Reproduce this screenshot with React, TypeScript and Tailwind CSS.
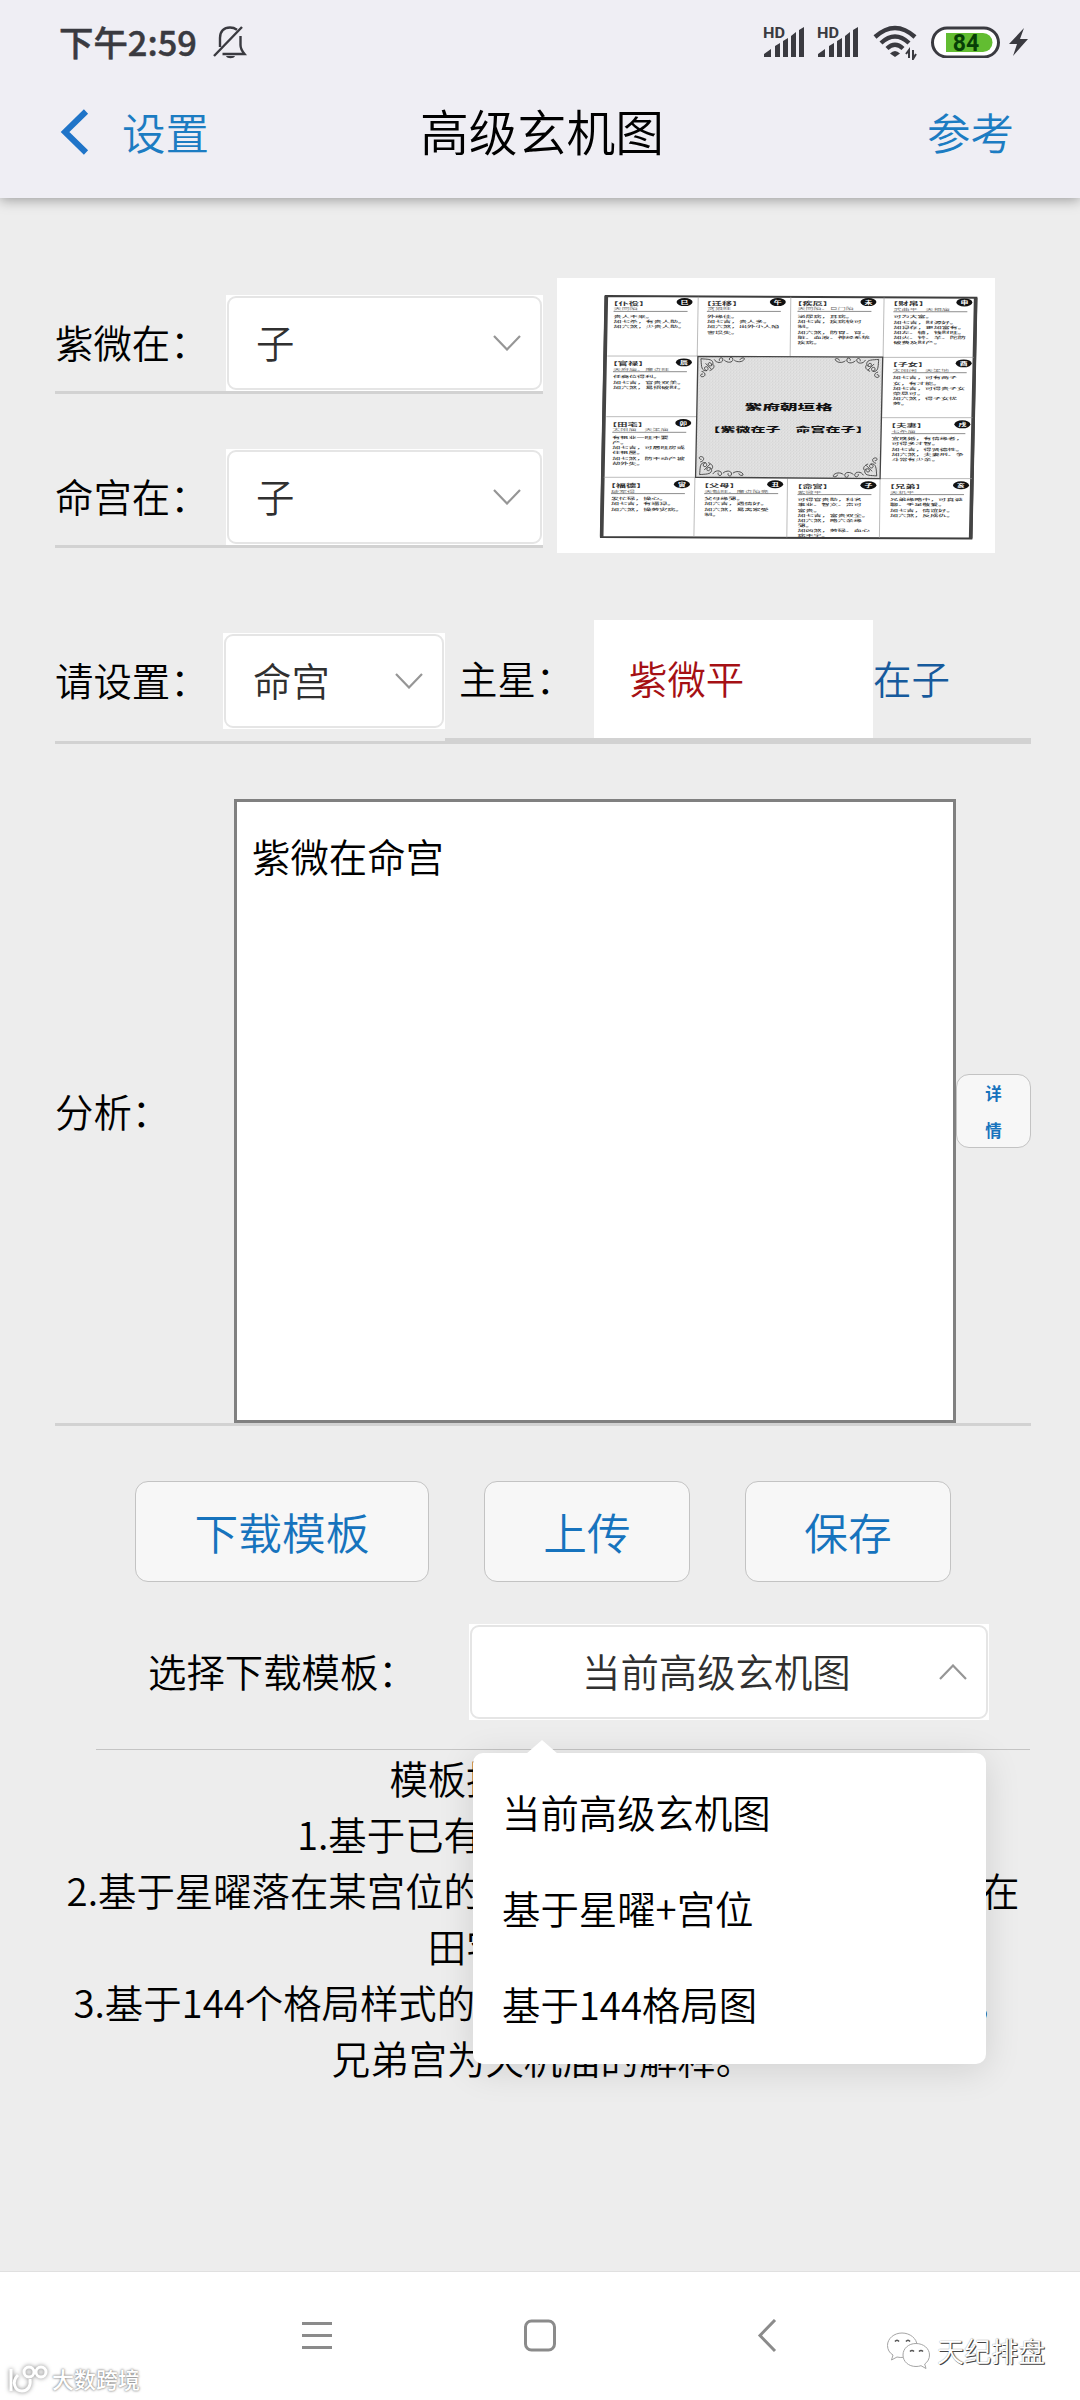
import type { ReactNode } from 'react'
import clsx from 'clsx'

const fontStack = "font-['Noto_Sans_CJK_SC','Noto_Sans',sans-serif]"

interface PalaceCell {
  x: number
  y: number
  title: string
  branch: string
  stars: string
  lines: string[]
}

const palaces: PalaceCell[] = [
  { x: 190, y: 98, title: '仆役', branch: '巳', stars: '天同陷', lines: ['贵人不来。', '加七杀，有贵人助。', '加六煞，少贵人助。'] },
  { x: 470, y: 98, title: '迁移', branch: '午', stars: '贪狼旺', lines: ['外缘佳。', '加七吉，贵人多。', '加六煞，出外小人陷', '害损失。'] },
  { x: 742, y: 98, title: '疾厄', branch: '未', stars: '天同陷、巨门陷', lines: ['泌尿病，耳病。', '加七吉，疾病较可', '制。', '加六煞，防胃、肾、', '脏、血液、神经系统', '疾病。'] },
  { x: 1030, y: 99, title: '财帛', branch: '申', stars: '武曲平　天相庙', lines: ['可为大富。', '加七吉，财源好。', '加禄存，更加富有。', '加左、辅，钱财旺。', '加火、铃、羊、陀防', '破费及财产。'] },
  { x: 188, y: 279, title: '官禄', branch: '辰', stars: '天府庙、廉贞旺', lines: ['任高位得利。', '加七吉，官贵双美。', '加六煞，易招破财。'] },
  { x: 1028, y: 282, title: '子女', branch: '酉', stars: '太阳闲　天梁地', lines: ['加七吉，可有两子', '女，有才能。', '加七吉，可得贵子女', '荣显可。', '加六煞，得子女忧', '劳。'] },
  { x: 186, y: 461, title: '田宅', branch: '卯', stars: '太阳庙　天梁庙', lines: ['有祖业一旺不要', '产。', '加七吉，可居旺房或', '住祖屋。', '加七煞，防不动产被', '劫外失。'] },
  { x: 1024, y: 465, title: '夫妻', branch: '戌', stars: '七杀庙', lines: ['宜晚婚，有情缘者，', '可得多才智。', '加七吉，得贤德性。', '加六煞，夫妻刑、争', '斗常有少亲。'] },
  { x: 182, y: 645, title: '福德', branch: '寅', stars: '破军得', lines: ['发忙碌，操心。', '加七吉，有福禄。', '加六煞，操劳灾病。'] },
  { x: 462, y: 645, title: '父母', branch: '丑', stars: '天魁旺、廉贞陷亮', lines: ['父母缘薄。', '加六吉，遇情好。', '加六煞，易离家受', '制。'] },
  { x: 742, y: 648, title: '命宫', branch: '子', stars: '紫微平', lines: ['可得官贵助，科名', '事业、智文、声可', '富贵。', '加七吉，富贵双全。', '加六煞，略六亲缘', '薄。', '加凶煞，劳碌、血心', '病不宁。'] },
  { x: 1020, y: 648, title: '兄弟', branch: '亥', stars: '天机平', lines: ['兄弟缘略中，可真诚', '聊、手足敬爱。', '加七吉，情谊好。', '加六煞，反成仇。'] },
]

const templateOptions = ['当前高级玄机图', '基于星曜+宫位', '基于144格局图']

const helpLines = [
  '模板提供三种方式',
  '1.基于已有的高级玄机图模板',
  '2.基于星曜落在某宫位的解释模板，例如紫微在命宫，在',
  '田宅宫的解释',
  '3.基于144个格局样式的解释模板，例如紫府朝垣格中，',
  '兄弟宫为天机庙的解释。',
]

function Chevron({ up = false }: { up?: boolean }) {
  return (
    <svg className="h-4 w-7" viewBox="0 0 28 16" fill="none" stroke="#969696" strokeWidth="2.200">
      <path d={up ? 'M1 15L14 1.5L27 15' : 'M1 1L14 14.5L27 1'} />
    </svg>
  )
}

interface SelectBoxProps {
  value: string
  className?: string
  open?: boolean
}

function SelectBox({ value, className, open }: SelectBoxProps) {
  return (
    <div className={clsx('h-24 shrink-0 bg-white p-px', className)}>
      <div className="flex h-full items-center justify-between rounded-[9px] border-2 border-[#e5e5e5] pr-[19px] text-[#303030]">
        <span className={clsx('pb-[3px]', open ? 'pl-[110px]' : 'pl-[27px]')}>{value}</span>
        <Chevron up={open} />
      </div>
    </div>
  )
}

function ActionButton({ children, className }: { children: ReactNode; className?: string }) {
  return (
    <button className={clsx('h-[101px] rounded-[13px] border border-[#c3c3c3] bg-[#f7f7f7] text-[43.7px] leading-none text-[#1673bd]', className)}>
      {children}
    </button>
  )
}

function Signal() {
  return (
    <svg className="h-8 w-[42px]" viewBox="0 0 42 32" fill="#3a3a40">
      <text x="0" y="12" fontSize="14.5" fontWeight="700" fontFamily="Roboto, sans-serif" textLength="22" lengthAdjust="spacingAndGlyphs">HD</text>
      <path d="M1 31v-3l7-5v8zM12 31V20l5-3v14zM20 31V15l5-3v19zM28 31V10l5-4v25zM36 31V4l5-3v30z" />
    </svg>
  )
}

function StatusBar() {
  return (
    <div className="flex h-[84px] items-center pr-[51px] pl-[59px] text-[#3a3a40]">
      <span className="pb-px text-[34.400px] leading-none font-medium [-webkit-text-stroke:0.500px_#3a3a40]">下午2:59</span>
      <svg className="ml-[16px] h-[34px] w-[34px]" viewBox="0 0 34 34" fill="none" stroke="#3a3a40" strokeWidth="2.4">
        <path d="M1 31L29 2M7 22V13C7 6 11 2.500 17 2.500c3 0 5 .8 7 2.200M27.500 11v9c0 4 1.500 6 4 9H9.500" />
        <path d="M13 31h9c-1 3-8 3-9 0z" fill="#3a3a40" stroke="none" />
      </svg>
      <div className="ml-auto flex items-center">
        <Signal />
        <div className="w-3" />
        <Signal />
        <svg className="ml-[14px] h-[36px] w-[46px]" viewBox="0 0 46 36" fill="none" stroke="#3a3a40" strokeWidth="4.400">
          <path d="M2 13Q22-5 42 13M8 19Q22 6 36 19M14 24.500Q22 17 30 24.500" />
          <path d="M22 33l-5-3.500q5-5 10 0z" fill="#3a3a40" stroke="none" />
          <path d="M36 34v-8l-3 4M40 26v9l3-5" strokeWidth="2" />
        </svg>
        <svg className="ml-[12px] h-[32px] w-[70px]" viewBox="0 0 70 32">
          <rect x="1.500" y="2" width="66" height="29" rx="14.500" fill="#fff" stroke="#3a3a40" strokeWidth="3" />
          <path d="M15 7h37a9.500 9.500 0 0 1 0 19H15z" fill="#62bd31" />
          <text x="35" y="25" textAnchor="middle" fontSize="23" fontWeight="700" fill="#073f07" fontFamily="Roboto, sans-serif">84</text>
        </svg>
        <svg className="ml-[8px] h-[30px] w-[20px]" viewBox="0 0 20 30" fill="#3a3a40">
          <path d="M15 1L0 17h8L4 29 19 12h-8z" />
        </svg>
      </div>
    </div>
  )
}

function NavHeader() {
  return (
    <header className="relative z-10 h-[198px] shrink-0 bg-[#efeef4] shadow-[0_2px_12px_rgba(0,0,0,0.35)]">
      <StatusBar />
      <div className="grid h-[95px] grid-cols-[1fr_auto_1fr] items-center pr-[66px] pl-[60px]">
        <div className="flex items-center text-[#1c7cc2]">
          <svg className="h-[46px] w-[30px]" viewBox="0 0 30 46" fill="none" stroke="#1f74c8" strokeWidth="6">
            <path d="M26 2.500L5 23l21 20.500" />
          </svg>
          <span className="ml-[32px] text-[43.500px] leading-none">设置</span>
        </div>
        <h1 className="ml-[10px] pb-[3px] text-[48.800px] leading-none text-black">高级玄机图</h1>
        <span className="text-right text-[43.500px] leading-none text-[#1c7cc2]">参考</span>
      </div>
    </header>
  )
}

// Corner flourish for the centre panel, drawn for the top-left and mirrored elsewhere
function Flourish({ transform }: { transform: string }) {
  return (
    <g transform={transform} fill="none" stroke="#333" strokeWidth="2.500">
      <path d="M4 4c18 2 34 0 36 12s-14 12-14 4 12-4 10 4M4 4c2 16 0 34 12 36s12-12 4-12-6 10 2 12M6 42c12 2 14 14 4 16s-8-10 0-8M44 6c6 12 24 12 26 2s-14-8-10 2M74 8c10 10 26 8 26-2s-14-6-10 2M104 8c8 8 26 6 30-2s-14-4-12 2" />
      <path d="M18 18l18 18M30 40c10-4 16-10 12-18" />
    </g>
  )
}

function ChartImage() {
  return (
    <svg className="ml-[14px] h-[275px] w-[438px] shrink-0 bg-white" viewBox="20 24 1315 825" fontFamily="'Noto Sans CJK SC', sans-serif">
      <defs>
        <pattern id="grain" width="9" height="9" patternUnits="userSpaceOnUse">
          <rect width="9" height="9" fill="#e4e4e4" />
          <path d="M0 1h3M5 4h3M1 7h3" stroke="#c6c6c6" strokeWidth="2" />
        </pattern>
      </defs>
      <path d="M166 78L1279 83 1264 806 152 801z" fill="#fff" stroke="#3d3d3d" strokeWidth="6" />
      <path d="M168 78L154 801M1277 83L1262 806" stroke="#444" strokeWidth="11" />
      <path
        d="M444 80L441 258M722 80L720 258M1002 82L999 260M171 258H441M998 262H1272M168 440H440M996 443H1268M160 622H436M990 626H1266M434 624L431 801M712 626L710 803M990 626L988 804"
        stroke="#9a9a9a"
        strokeWidth="2"
      />
      <path d="M443 259L998 261 990 626 436 622z" fill="url(#grain)" stroke="#444" strokeWidth="4" />
      <Flourish transform="translate(448 262)" />
      <Flourish transform="translate(990 264) scale(-1 1)" />
      <Flourish transform="translate(444 618) scale(1 -1)" />
      <Flourish transform="translate(984 622) scale(-1 -1)" />
      {palaces.map((p) => (
        <g key={p.title} fill="#333">
          <text transform={`translate(${p.x - 16} ${p.y + 6}) scale(2.05 1)`} fontSize="15" fontWeight="700">【{p.title}】</text>
          <ellipse cx={p.x + 213} cy={p.y - 2} rx="24" ry="12" fill="#111" />
          <text transform={`translate(${p.x + 213} ${p.y + 3}) scale(1.7 1)`} fontSize="14" fontWeight="700" textAnchor="middle" fill="#fff">{p.branch}</text>
          <text transform={`translate(${p.x} ${p.y + 23}) scale(2.2 1)`} fontSize="11" fill="#666">{p.stars}</text>
          <path d={`M${p.x} ${p.y + 26}h222`} stroke="#555" strokeWidth="2" />
          {p.lines.map((line, i) => (
            <text key={line} transform={`translate(${p.x} ${p.y + 46 + i * 15.5}) scale(2.2 1)`} fontSize="11" fontWeight="500">{line}</text>
          ))}
        </g>
      ))}
      <text transform="translate(584 419) scale(2.2 1)" fontSize="24" fontWeight="900" fill="#111">紫府朝垣格</text>
      <text transform="translate(466 487) scale(2.2 1)" fontSize="20.500" fontWeight="900" fill="#111">【紫微在子　命宫在子】</text>
    </svg>
  )
}

function PalaceSelectors() {
  return (
    <section className="flex h-[355px] shrink-0 pt-20 pl-[55px]">
      <div className="flex w-[488px] flex-col gap-[55px] pt-[17px]">
        {['紫微在：', '命宫在：'].map((label) => (
          <div key={label} className="flex h-[99px] items-center justify-between border-b-3 border-[#d2d2d2]">
            <span className="pb-[3px]">{label}</span>
            <SelectBox value="子" className="w-[317px]" />
          </div>
        ))}
      </div>
      <ChartImage />
    </section>
  )
}

function MainStarRow() {
  return (
    <section className="mt-[67px] flex h-[124px] shrink-0 pr-[49px] pl-[55px]">
      <div className="flex w-[390px] items-center justify-between border-b-3 border-[#d2d2d2]">
        <span className="pb-[3px]">请设置：</span>
        <SelectBox value="命宫" className="w-[222px]" />
      </div>
      <div className="flex flex-1 items-center border-b-6 border-[#d2d2d2]">
        <span className="w-[149px] shrink-0 pb-[3px] pl-[14px] whitespace-nowrap">主星：</span>
        <div className="flex h-full w-[279px] items-center bg-white pb-[3px] pl-[35px] text-[#a51014]">紫微平</div>
        <span className="pb-[3px] text-[#165a9c]">在子</span>
      </div>
    </section>
  )
}

function AnalysisRow() {
  return (
    <section className="mt-[55px] mr-[49px] ml-[55px] flex h-[627px] shrink-0 items-center border-b-3 border-[#d2d2d2]">
      <span className="w-[179px] pb-[2px]">分析：</span>
      <div className="h-full w-[722px] border-3 border-[#808080] bg-white px-[15px] pt-6 leading-[58px]">紫微在命宫</div>
      <button className="h-[74px] w-[75px] rounded-[13px] border border-[#c3c3c3] bg-[#f7f7f7] px-[28px] pb-[6px] text-[16.500px] leading-[37px] font-bold text-[#1673bd]">
        <span className="block">详</span>
        <span className="block">情</span>
      </button>
    </section>
  )
}

function TemplateRow() {
  return (
    <section className="relative mt-[42px] mr-[50px] ml-[96px] flex h-[126px] shrink-0 items-start border-b border-[#c4c4c4]">
      <div className="flex h-24 w-full items-center pl-[52px]">
        <span className="w-[321px] pb-[3px]">选择下载模板：</span>
        <SelectBox value="当前高级玄机图" className="w-[520px]" open />
      </div>

      {/* Dropdown menu */}
      <div className="absolute top-[129px] left-[377px] z-20 h-[311px] w-[513px] rounded-[10px] bg-white pt-[10px] text-black shadow-[0_6px_36px_rgba(0,0,0,0.12)]">
        <div className="absolute -top-[13px] left-[53px] h-[14px] w-[32px] bg-white [clip-path:polygon(50%_0,100%_100%,0_100%)]" />
        <ul>
          {templateOptions.map((option) => (
            <li key={option} className="flex h-24 items-center pl-[29px]">{option}</li>
          ))}
        </ul>
      </div>
    </section>
  )
}

function SystemNav() {
  return (
    <footer className="relative h-[129px] shrink-0 border-t border-[#e0e0e0] bg-white">
      <div className="flex items-center pt-[47px] pl-[301px] text-[#8b8b8b]">
        <svg className="h-[34px] w-[32px]" viewBox="0 0 32 34" stroke="currentColor" strokeWidth="3">
          <path d="M1 4.500h30M1 16.500h30M1 28.500h30" />
        </svg>
        <svg className="ml-[190px] h-[34px] w-[34px]" viewBox="0 0 34 34" fill="none" stroke="currentColor" strokeWidth="3">
          <rect x="2.500" y="2" width="29" height="29" rx="6" />
        </svg>
        <svg className="ml-[200px] h-[34px] w-[20px]" viewBox="0 0 20 34" fill="none" stroke="currentColor" strokeWidth="3">
          <path d="M18 1L3 16.500 18 32" />
        </svg>
      </div>

      {/* Watermarks */}
      <div className="absolute top-[59px] left-[886px] flex items-center">
        <svg className="h-[39px] w-[46px]" viewBox="0 0 46 39" fill="#fff" stroke="#a5a5a5" strokeWidth="1">
          <path d="M16 2C8 2 1.500 7.500 1.500 14.500c0 4 2 7.500 5.500 9.500l-1.500 5 5.500-3c8 2 20-2 20-11.500C31 7.500 24 2 16 2z" />
          <path d="M30 12.500c-7.500 0-13 5-13 11.500s5.500 11.500 13 11.500c2 0 3.500-.3 5-.8l5 2.800-1.300-4.500c3-2 4.800-5.300 4.800-9 0-6.500-6-11.500-13.500-11.500z" />
          <path d="M9 10.500q2-2.500 4 0M20 10.500q2-2.500 4 0M24 20.500q2-2 4 0M33 20.500q2-2 4 0" fill="none" stroke="#555" strokeWidth="1.600" />
        </svg>
        <span className="ml-[5px] pb-px text-[27px] leading-none text-white [text-shadow:1px_1px_0_#444,1px_0_1px_#777,0_0_1px_#999]">天纪排盘</span>
      </div>
      <div className="absolute top-[91px] left-[7px] flex items-center">
        <svg className="h-[31px] w-[43px] drop-shadow-[0_0_2px_rgba(0,0,0,0.5)]" viewBox="0 0 43 31" fill="none" stroke="#fff" strokeWidth="3">
          <path d="M4 6v22M11 12c-7 7-3 16 4 16 6 0 9-5 8-12" />
          <circle cx="22" cy="9" r="5" />
          <circle cx="34" cy="9" r="5" />
        </svg>
        <span className="ml-[2px] pb-[2px] text-[22px] leading-none font-medium text-white [text-shadow:0_0_2px_#777,0_0_3px_#aaa]">大数跨境</span>
      </div>
    </footer>
  )
}

export default function App() {
  return (
    <div className={clsx('flex h-[2400px] w-[1080px] flex-col overflow-hidden bg-[#ededed] text-[38.400px] leading-none font-[350] text-black', fontStack)}>
      <NavHeader />
      <PalaceSelectors />
      <MainStarRow />
      <AnalysisRow />

      <div className="mt-[55px] flex shrink-0 gap-[55px] pl-[135px]">
        <ActionButton className="w-[294px]">下载模板</ActionButton>
        <ActionButton className="w-[206px]">上传</ActionButton>
        <ActionButton className="w-[206px]">保存</ActionButton>
      </div>

      <TemplateRow />

      <div className="-mt-px mr-[49px] ml-[55px] flex-1 text-center leading-[56px] whitespace-nowrap">
        {helpLines.map((line) => (
          <p key={line}>{line}</p>
        ))}
      </div>

      <SystemNav />
    </div>
  )
}
